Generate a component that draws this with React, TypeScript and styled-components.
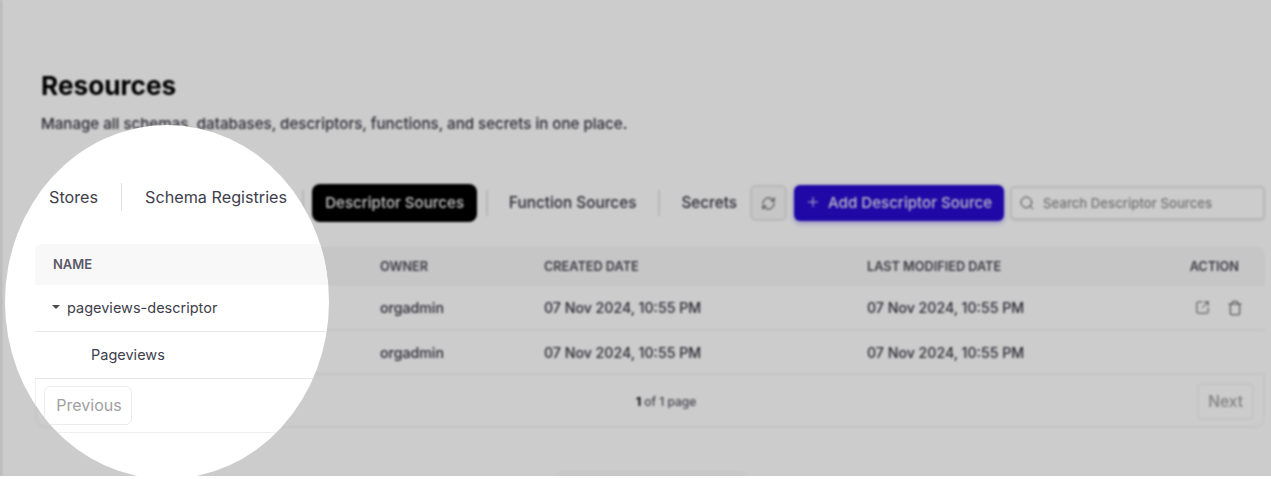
import { RefreshCw, Plus, Search, SquareArrowOutUpRight, Trash } from "lucide-react";
import styled, { createGlobalStyle } from "styled-components";

const GlobalStyle = createGlobalStyle`
  html, body {
    margin: 0;
    padding: 0;
    background: #ffffff;
    font-family: Inter, "Liberation Sans", sans-serif;
  }
`;

const Page = styled.div`
  position: relative;
  width: 1271px;
  height: 476px;
  overflow: hidden;
`;

const Backdrop = styled.div`
  box-sizing: border-box;
  height: 476px;
  padding: 72px 6px 0 33px;
  border-left: 2px solid #e0e0e0;
  display: flex;
  flex-direction: column;
  filter: blur(0.8px);
`;

const Scrim = styled.div`
  position: absolute;
  inset: 0;
  background: rgba(0, 0, 0, 0.2);
`;

const Title = styled.h1`
  margin: 0 0 0 6px;
  font-size: 26.2px;
  line-height: 28px;
  font-weight: 700;
  color: #000;
`;

const Subtitle = styled.p`
  margin: 15px 0 0 6px;
  font-size: 15.1px;
  line-height: 18px;
  font-weight: 500;
  color: #33333f;
`;

const Toolbar = styled.div`
  display: flex;
  align-items: center;
  justify-content: flex-end;
  height: 38px;
  margin-top: 51px;
`;

const Tab = styled.button<{ $active?: boolean }>`
  flex: none;
  height: 38px;
  padding: 0 13px 2px;
  border: 0;
  border-radius: 8px;
  font-family: inherit;
  font-size: ${(p) => (p.$active ? "15.1px" : "15.3px")};
  font-weight: 500;
  background: ${(p) => (p.$active ? "#000" : "transparent")};
  color: ${(p) => (p.$active ? "#f2f2f2" : "#33333f")};
`;

const TabDivider = styled.span`
  flex: none;
  width: 2px;
  height: 26px;
  margin: 0 8px 0 9px;
  background: #e6e6e6;
`;

const RefreshButton = styled.button`
  flex: none;
  box-sizing: border-box;
  width: 37px;
  height: 36px;
  display: grid;
  place-items: center;
  border: 2px solid #e6e6e6;
  border-radius: 6px;
  background: #f8f8f8;
  color: #333;
`;

const AddButton = styled.button`
  flex: none;
  box-sizing: border-box;
  width: 210px;
  height: 36px;
  margin-left: 7px;
  display: flex;
  align-items: center;
  gap: 7px;
  padding: 0 11px 2px;
  border: 0;
  border-radius: 6px;
  background: #270ad0;
  color: #e8e6fb;
  font-family: inherit;
  font-size: 15.1px;
  font-weight: 500;
  white-space: nowrap;
  box-shadow: 0 2px 5px rgba(39, 10, 208, 0.35);
`;

const SearchBox = styled.label`
  flex: none;
  box-sizing: border-box;
  width: 255px;
  height: 34px;
  margin-left: 6px;
  display: flex;
  align-items: center;
  gap: 8px;
  padding: 0 7px;
  border: 2px solid #e6e6e6;
  border-radius: 5px;
  background: #fff;
  color: #555;
  font-size: 13.2px;
  font-weight: 500;
  box-shadow: 0 1px 2px rgba(0, 0, 0, 0.1);
`;

const SearchHint = styled.span`
  color: #909090;
  white-space: nowrap;
  padding-bottom: 1px;
`;

const Table = styled.div`
  margin-top: 25px;
`;

const HeaderRow = styled.div`
  display: grid;
  grid-template-columns: 345px 164px 323px 1fr 100px;
  align-items: center;
  height: 39px;
  border-radius: 8px 8px 0 0;
  background: #f8f8f8;
  font-size: 12.7px;
  font-weight: 600;
  color: #4a4a55;
`;

const BodyRow = styled.div<{ $height: number }>`
  box-sizing: border-box;
  display: grid;
  grid-template-columns: 345px 164px 323px 1fr 100px;
  align-items: center;
  height: ${(p) => p.$height}px;
  border-bottom: 2px solid #f6f6f6;
  font-size: 14.15px;
  font-weight: 500;
  color: #33333f;
`;

const ActionHead = styled.div`
  text-align: right;
  padding-right: 26px;
`;

const ActionIcons = styled.div`
  display: flex;
  justify-content: flex-end;
  align-items: center;
  gap: 17px;
  padding-right: 22px;
  color: #5a5a5a;
`;

const Pager = styled.div`
  box-sizing: border-box;
  height: 53px;
  padding: 2px 9px 0;
  display: flex;
  align-items: center;
  justify-content: space-between;
  border: 2px solid #f8f8f8;
  border-top: 0;
  border-radius: 0 0 10px 10px;
`;

/* keeps the page count centred where the lens shows the Previous button */
const PagerSpacer = styled.span`
  width: 86px;
`;

const PagerButton = styled.button`
  box-sizing: border-box;
  height: 37px;
  padding: 0 9px;
  border: 2px solid #f6f6f6;
  border-radius: 5px;
  background: #fff;
  font-family: inherit;
  font-size: 15.5px;
  font-weight: 500;
  color: #a0a0a0;
`;

const PageCount = styled.span`
  font-size: 12px;
  font-weight: 500;
  color: #55555f;
  margin-left: 3px;

  b {
    color: #000;
    font-weight: 700;
  }
`;

const FooterCard = styled.div`
  flex: none;
  width: 197px;
  height: 20px;
  margin: 43px 0 0 518px;
  border-radius: 10px 10px 0 0;
  background: #fafafa;
`;

/* the spotlight sitting over the dimmed page, it holds the tabs and the name column */
const Lens = styled.div`
  position: absolute;
  left: 5px;
  top: 125px;
  width: 324px;
  height: 354px;
  padding: 58px 0 0 30px;
  box-sizing: border-box;
  background: #fff;
  clip-path: ellipse(162px 177px at 162px 177px);
  overflow: hidden;
`;

const LensInner = styled.div`
  width: 420px;
`;

const LensTabs = styled.div`
  display: flex;
  align-items: center;
  height: 28px;
  padding-left: 14px;
`;

const LensTab = styled.span`
  font-size: 16.2px;
  line-height: 28px;
  color: #3e3e4c;
  white-space: nowrap;
`;

const LensDivider = styled.span`
  width: 1px;
  height: 28px;
  margin: 0 23px;
  background: #dedede;
`;

const LensHeader = styled.div`
  display: flex;
  align-items: center;
  height: 41px;
  margin-top: 33px;
  padding: 0 0 2px 18px;
  box-sizing: border-box;
  border-radius: 6px 6px 0 0;
  background: #f8f8f8;
  font-size: 13px;
  font-weight: 600;
  color: #5a5a68;
`;

const LensRow = styled.div<{ $indent: number; $height: number }>`
  box-sizing: border-box;
  display: flex;
  align-items: center;
  gap: 7px;
  height: ${(p) => p.$height}px;
  padding: 0 0 2px ${(p) => p.$indent}px;
  border-bottom: 1px solid #e6e6e6;
  font-size: 14.5px;
  color: #3e3e4c;
`;

const Caret = styled.span`
  width: 0;
  height: 0;
  border-left: 4px solid transparent;
  border-right: 4px solid transparent;
  border-top: 4px solid #4a4a4a;
`;

const LensPager = styled.div`
  box-sizing: border-box;
  display: flex;
  align-items: center;
  height: 54px;
  padding-left: 8px;
  border: 1px solid #efefef;
  border-top: 0;
  border-radius: 0 0 10px 10px;
`;

const LensPagerButton = styled.button`
  box-sizing: border-box;
  width: 88px;
  height: 39px;
  padding: 0 0 1px 2px;
  border: 1px solid #ececec;
  border-radius: 6px;
  background: #fff;
  font-family: inherit;
  font-size: 16px;
  color: #a0a0a0;
`;

export default function App() {
  return (
    <Page>
      <GlobalStyle />
      <Backdrop>
        <Title>Resources</Title>
        <Subtitle>Manage all schemas, databases, descriptors, functions, and secrets in one place.</Subtitle>
        <Toolbar>
          <TabDivider />
          <Tab $active>Descriptor Sources</Tab>
          <TabDivider />
          <Tab>Function Sources</Tab>
          <TabDivider />
          <Tab>Secrets</Tab>
          <RefreshButton>
            <RefreshCw size={15} strokeWidth={1.6} />
          </RefreshButton>
          <AddButton>
            <Plus size={16} strokeWidth={1.5} />
            Add Descriptor Source
          </AddButton>
          <SearchBox>
            <Search size={16} strokeWidth={1.5} />
            <SearchHint>Search Descriptor Sources</SearchHint>
          </SearchBox>
        </Toolbar>
        <Table>
          <HeaderRow>
            <div />
            <div>OWNER</div>
            <div>CREATED DATE</div>
            <div>LAST MODIFIED DATE</div>
            <ActionHead>ACTION</ActionHead>
          </HeaderRow>
          <BodyRow $height={45}>
            <div />
            <div>orgadmin</div>
            <div>07 Nov 2024, 10:55 PM</div>
            <div>07 Nov 2024, 10:55 PM</div>
            <ActionIcons>
              <SquareArrowOutUpRight size={15} strokeWidth={1.6} />
              <Trash size={16} strokeWidth={1.6} />
            </ActionIcons>
          </BodyRow>
          <BodyRow $height={44}>
            <div />
            <div>orgadmin</div>
            <div>07 Nov 2024, 10:55 PM</div>
            <div>07 Nov 2024, 10:55 PM</div>
            <div />
          </BodyRow>
          <Pager>
            <PagerSpacer />
            <PageCount>
              <b>1</b> of 1 page
            </PageCount>
            <PagerButton>Next</PagerButton>
          </Pager>
        </Table>
        <FooterCard />
      </Backdrop>
      <Scrim />
      <Lens>
        <LensInner>
          <LensTabs>
            <LensTab>Stores</LensTab>
            <LensDivider />
            <LensTab>Schema Registries</LensTab>
          </LensTabs>
          <LensHeader>NAME</LensHeader>
          <LensRow $indent={17} $height={47}>
            <Caret />
            pageviews-descriptor
          </LensRow>
          <LensRow $indent={56} $height={47}>
            Pageviews
          </LensRow>
          <LensPager>
            <LensPagerButton>Previous</LensPagerButton>
          </LensPager>
        </LensInner>
      </Lens>
    </Page>
  );
}
